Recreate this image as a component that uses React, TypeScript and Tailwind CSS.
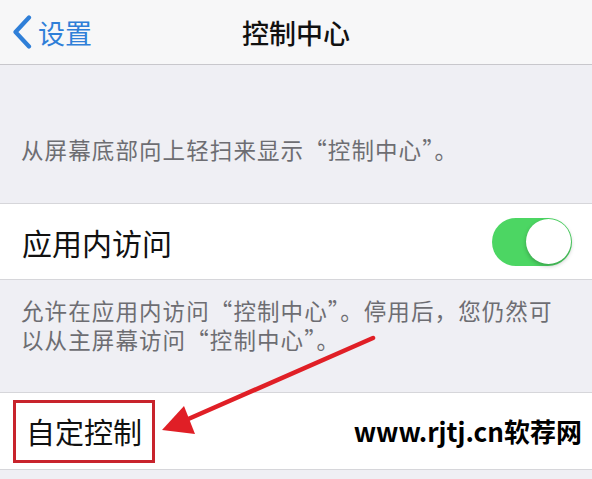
import React from "react";

const cjk = { fontFamily: '"Noto Sans CJK SC", "Noto Sans", sans-serif' };

export default function App() {
  return (
    <div className="relative w-[592px] h-[479px] overflow-hidden bg-[#efeff4]" style={cjk}>
      {/* nav bar */}
      <div className="h-[65px] bg-[#f7f7f8] border-b border-[#c8c7cc] grid grid-cols-[1fr_auto_1fr] items-center">
        <div className="flex items-center pl-[12px] gap-[6px] text-[#2f7fd8]">
          <svg width="20" height="34" viewBox="0 0 20 34" className="shrink-0">
            <path d="M17 2.5 L3.5 17 L17 31.5" fill="none" stroke="#2f7fd8" strokeWidth="4.2" strokeLinecap="round" strokeLinejoin="round" />
          </svg>
          <span className="text-[27px] leading-none">设置</span>
        </div>
        <div className="text-[27px] leading-none font-medium text-[#111]">控制中心</div>
        <div />
      </div>

      {/* description 1 */}
      <div className="h-[138px] px-[21px] pt-[70px]">
        <p className="text-[22.5px] leading-[29px] tracking-[1.1px] text-[#6d6d72]">从屏幕底部向上轻扫来显示“控制中心”。</p>
      </div>

      {/* row 1 */}
      <div className="h-[77px] bg-white border-y border-[#d6d6da] flex items-center justify-between pl-[22px] pr-[20px]">
        <span className="text-[30px] leading-none text-[#111]">应用内访问</span>
        <div className="w-[80px] h-[48px] rounded-full bg-[#4cd663] flex items-center justify-end pr-[1px]">
          <div className="w-[45px] h-[45px] rounded-full bg-white shadow-[0_2px_4px_rgba(0,0,0,0.25)]" />
        </div>
      </div>

      {/* description 2 */}
      <div className="h-[112px] px-[21px] pt-[16px]">
        <p className="text-[22.5px] leading-[29px] tracking-[1.1px] text-[#6d6d72]">
          允许在应用内访问“控制中心”。停用后，您仍然可
          <br />
          以从主屏幕访问“控制中心”。
        </p>
      </div>

      {/* row 2 */}
      <div className="h-[78px] bg-white border-y border-[#d6d6da] flex items-center justify-between pl-[13px] pr-[10px]">
        <div className="h-[63px] px-[10px] border-[3px] border-[#c8232c] flex items-center">
          <span className="text-[29px] leading-none text-[#111]">自定控制</span>
        </div>
        <span className="text-[26px] leading-none font-bold text-black">www.rjtj.cn软荐网</span>
      </div>

      {/* annotation arrow */}
      <svg className="absolute inset-0 pointer-events-none" width="592" height="479" viewBox="0 0 592 479">
        <line x1="373" y1="338" x2="186" y2="420" stroke="#e01f26" strokeWidth="4.5" strokeLinecap="round" />
        <polygon points="162,430 184,406 195,434" fill="#e01f26" />
      </svg>
    </div>
  );
}
